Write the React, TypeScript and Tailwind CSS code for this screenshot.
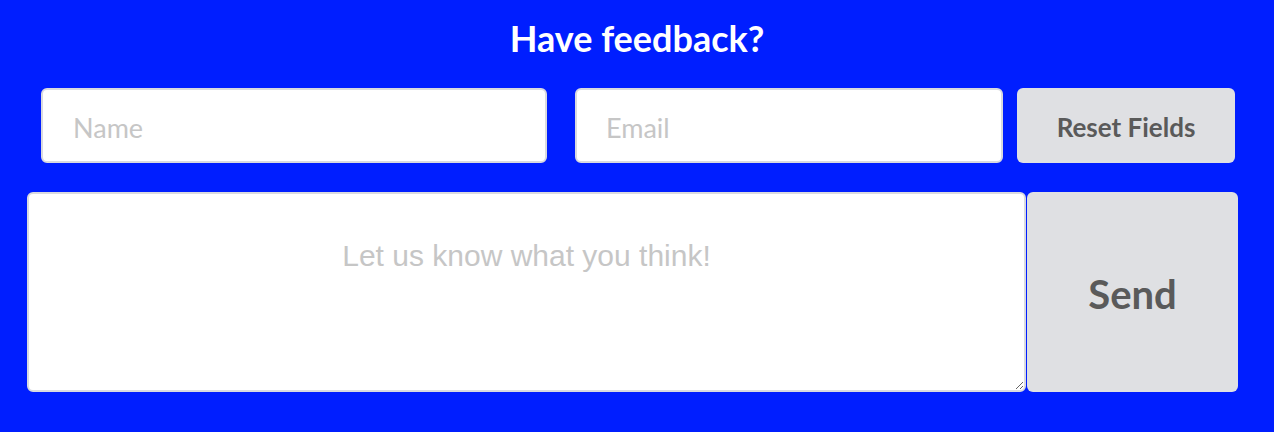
import React from "react";

export default function App() {
  return (
    <div className="w-[1274px] h-[432px] bg-[#001eff] font-['Lato',sans-serif] flex flex-col">
      <h1 className="text-white font-bold text-[36px] leading-[40px] text-center mt-[18px]">
        Have feedback?
      </h1>
      <div className="flex mt-[30px] pl-[41px] h-[75px]">
        <input
          placeholder="Name"
          className="w-[506px] h-full bg-white rounded-[6px] border-2 border-[#d9dadf] pl-[30px] pt-[3px] text-[27px] placeholder:text-[#c6c6c6] outline-none font-['Lato',sans-serif]"
        />
        <input
          placeholder="Email"
          className="ml-[28px] w-[428px] h-full bg-white rounded-[6px] border-2 border-[#d9dadf] pl-[29px] pt-[3px] text-[27px] placeholder:text-[#c6c6c6] outline-none font-['Lato',sans-serif]"
        />
        <button className="ml-[14px] w-[218px] h-full pt-[3px] bg-[#dfe0e3] rounded-[6px] text-[#5a5a5a] font-bold text-[26px] font-['Lato',sans-serif]">
          Reset Fields
        </button>
      </div>
      <div className="flex mt-[29px] pl-[27px] h-[200px]">
        <textarea
          placeholder="Let us know what you think!"
          className="w-[999px] h-full bg-white rounded-[6px] border-2 border-[#d9dadf] pt-[45px] text-center text-[30px] leading-[34px] placeholder:text-[#c6c6c6] outline-none font-['Liberation_Sans',Arial,sans-serif]"
        />
        <button className="ml-[1px] w-[211px] h-full pt-[4px] bg-[#dfe0e3] rounded-[6px] text-[#5a5a5a] font-bold text-[40px] font-['Lato',sans-serif]">
          Send
        </button>
      </div>
    </div>
  );
}
